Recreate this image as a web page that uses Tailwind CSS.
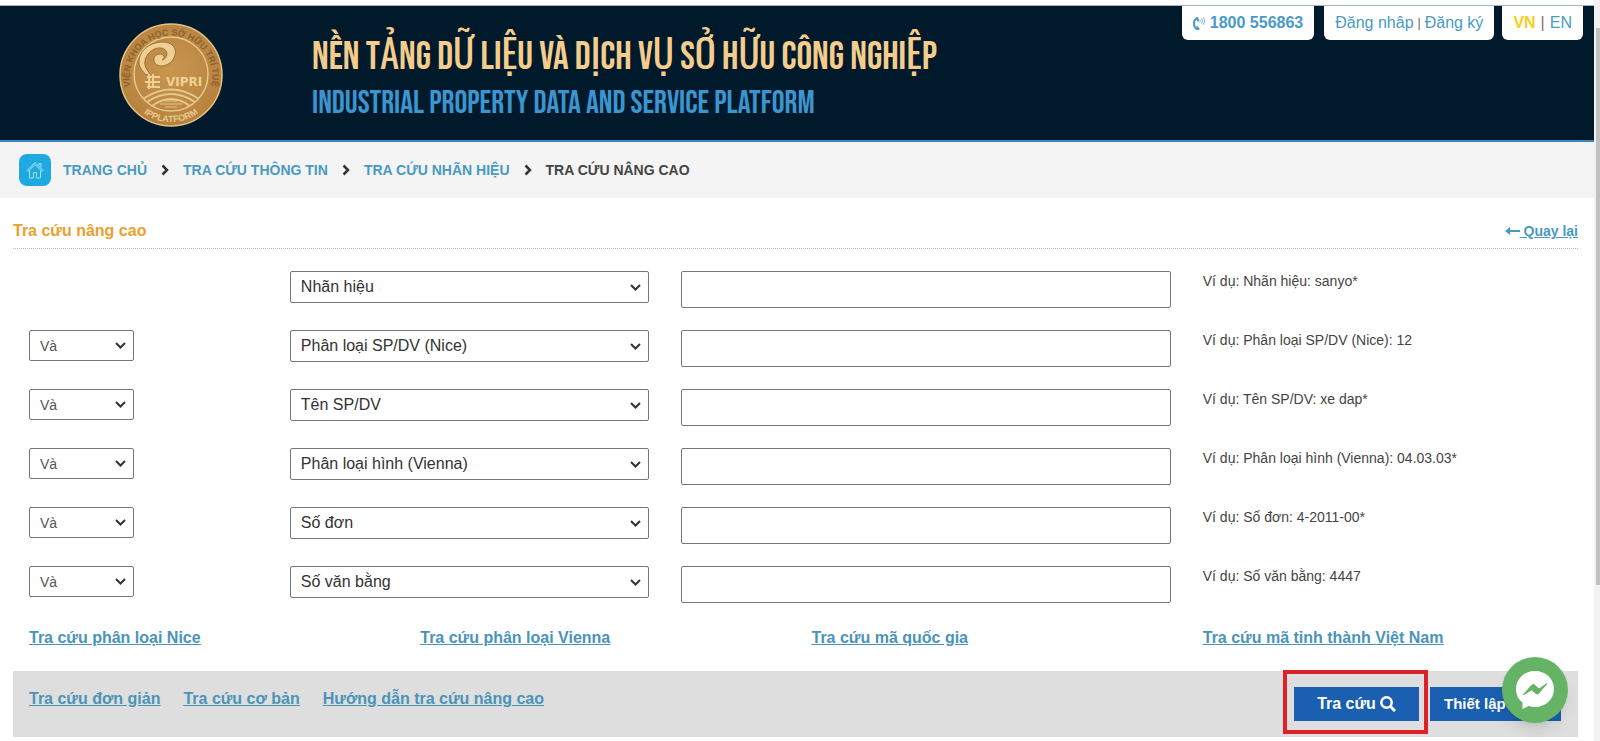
<!DOCTYPE html>
<html lang="vi">
<head>
    <meta charset="UTF-8">
    <meta name="viewport" content="width=device-width, initial-scale=1.0">
    <title>Tra cứu nâng cao</title>
    <script src="https://cdn.jsdelivr.net/npm/@tailwindcss/browser@4"></script>
</head>
<body class="flex min-h-screen bg-white pt-[5px] font-['Liberation_Sans',Arial,sans-serif] text-[#444]">

    <!-- shared icons -->
    <svg class="hidden">
        <symbol id="chevron-right" viewBox="0 0 8 12"><path d="M1.500 1.500L6 6L1.500 10.500" fill="none" stroke="#333" stroke-width="2.500"></path></symbol>
        <symbol id="chevron-down" viewBox="0 0 11 7"><path d="M1 1L5.500 5.500L10 1" fill="none" stroke="#333" stroke-width="2"></path></symbol>
    </svg>

    <div class="min-w-0 flex-1">
        <header class="relative flex items-center border-t border-b-2 border-t-[#9fb9c4] border-b-[#3d86bd] bg-[#001a2c] pt-4 pb-3">
            <svg class="ml-[118px] size-[106px] shrink-0" viewBox="0 0 106 106" aria-label="VIPRI">
                <defs>
                    <radialGradient id="gold" cx="50%" cy="45%" r="60%">
                        <stop offset="0" stop-color="#c99650"></stop>
                        <stop offset="1" stop-color="#b5803c"></stop>
                    </radialGradient>
                    <path id="arc-top" d="M13 66A41.500 41.500 0 1 1 93 66"></path>
                    <path id="arc-bottom" d="M17 83A46.500 46.500 0 0 0 89 83"></path>
                    <clipPath id="inner"><circle cx="53" cy="52" r="37"></circle></clipPath>
                </defs>
                <circle cx="53" cy="53" r="51" fill="url(#gold)" stroke="#e3c288" stroke-width="1.500"></circle>
                <circle cx="53" cy="52" r="37" fill="none" stroke="#e6c78c" stroke-width="1.500"></circle>
                <g fill="#8d6230" font-family="Liberation Sans" font-weight="bold" font-size="9">
                    <text><textPath href="#arc-top" startOffset="50%" text-anchor="middle">VIỆN KHOA HỌC SỞ HỮU TRÍ TUỆ</textPath></text>
                    <text fill="#e6c78c"><textPath href="#arc-bottom" startOffset="50%" text-anchor="middle">IPPLATFORM</textPath></text>
                </g>
                <path d="M28 53C25 49 21 46 21 40C21 27 34 20 45 20C54 20 59 26 57 33C55 42 45 46 39 43C34 40 35 32 42 32C46 32 48 36 44 38C49 37 51 30 46 27C38 23 28 31 27 39C26 44 29 48 32 52Z" fill="#efcf92" stroke="#8d6230" stroke-width="0.800"></path>
                <path d="M29 55H42M27 60H42M29 65H42M31 52V67M35 52V66" fill="none" stroke="#efcf92" stroke-width="2"></path>
                <text x="48" y="64" fill="#efd097" font-family="DejaVu Sans" font-weight="bold" font-size="12">VIPRI</text>
                <g clip-path="url(#inner)" fill="none" stroke="#e6c78c" stroke-width="2">
                    <path d="M25 77Q53 58 81 77"></path>
                    <path d="M29 80Q53 64 77 80"></path>
                    <path d="M34 84Q53 70 72 84"></path>
                    <path d="M42 82H64M47 79H59M47 85H59" stroke-width="1"></path>
                </g>
            </svg>
            <div class="ml-[88px] pt-1.5 font-['Bebas_Neue','Oswald','Roboto_Condensed','Liberation_Sans_Narrow','Liberation_Sans',sans-serif]">
                <h1 class="text-[39px] leading-[52px] text-[#f4cd8c]">NỀN TẢNG DỮ LIỆU VÀ DỊCH VỤ SỞ HỮU CÔNG NGHIỆP</h1>
                <p class="text-[32px] leading-10 text-[#3b95cf]">INDUSTRIAL PROPERTY DATA AND SERVICE PLATFORM</p>
            </div>
            <div class="absolute top-0 right-[11px] flex text-base text-[#4a9ac4]">
                <a href="tel:1800556863" class="mr-2.5 flex items-center gap-1 rounded-b-md bg-white px-[11px] py-[5px] font-bold">
                    <svg class="size-[13px]" viewBox="0 0 13 13" fill="none" stroke="currentColor" stroke-linecap="round">
                        <path d="M4.500 1C-0.500 3 0 11 5 12.500" stroke-width="2"></path>
                        <path d="M4 1.200L5 3.500M4.200 10L5.600 11.800" stroke-width="2"></path>
                        <path d="M7 3Q8 4 7 5M8.800 1.800Q10.500 4 8.800 6.200M10.600 0.600Q13 4 10.600 7.400" stroke-width="0.700"></path>
                    </svg>
                    1800 556863
                </a>
                <div class="mr-2 flex items-center gap-1 rounded-b-md bg-white px-[11px] py-[5px]">
                    <a href="#">Đăng nhâp</a><span class="text-xs text-[#555]">|</span><a href="#">Đăng ký</a>
                </div>
                <div class="flex items-center gap-[5px] rounded-b-md bg-white px-[11px] py-[5px]">
                    <a href="#" class="font-bold text-[#f5cf1c]">VN</a><span class="text-[#8a6a72]">|</span><a href="#">EN</a>
                </div>
            </div>
        </header>

        <nav class="flex items-center gap-[14px] bg-[#f4f4f4] px-[19px] py-3 text-sm font-bold text-[#4a99c1]">
            <a href="#" aria-label="Trang chủ" class="-mr-0.5 flex size-8 items-center justify-center rounded-lg bg-[#1ea9e1]">
                <svg class="size-[18px]" viewBox="0 0 18 18" fill="none" stroke="#a5e4fb" stroke-linejoin="round">
                    <path d="M1 9.500L9 1.500L17 9.500L16 10.500L9 3.500L2 10.500Z"></path>
                    <path d="M3.500 9.500V17H7.500V11.500H10.500V17H14.500V9.500M13 4.500V2.500H15V6.500"></path>
                </svg>
            </a>
            <a href="#">TRANG CHỦ</a>
            <svg class="h-3 w-2"><use href="#chevron-right"></use></svg>
            <a href="#">TRA CỨU THÔNG TIN</a>
            <svg class="h-3 w-2"><use href="#chevron-right"></use></svg>
            <a href="#">TRA CỨU NHÃN HIỆU</a>
            <svg class="h-3 w-2"><use href="#chevron-right"></use></svg>
            <span class="text-[#444]">TRA CỨU NÂNG CAO</span>
        </nav>

        <main class="pr-4 pl-[13px]">
            <div class="flex items-center justify-between border-b border-dotted border-[#bbb] pt-[21px] pb-[5px]">
                <h2 class="text-base font-bold text-[#eb9f2d]">Tra cứu nâng cao</h2>
                <a href="#" class="flex items-center text-sm font-bold text-[#4a99c1]">
                    <svg class="h-2 w-[15px]" viewBox="0 0 15 8" fill="currentColor"><path d="M0 4L5 0V3H15V5H5V8Z"></path></svg>
                    <span class="whitespace-pre underline"> Quay lại</span>
                </a>
            </div>

            <form>
                <div class="space-y-[22px] pt-[22px] text-sm">
                    <div class="grid grid-cols-12 items-start">
                        <div class="col-span-2"></div>
                        <div class="relative col-span-3 px-4">
                            <select aria-label="Trường 1" class="block h-8 w-full appearance-none rounded-xs border border-[#767676] bg-white px-2.5 text-base text-[#333]"><option>Nhãn hiệu</option></select>
                            <svg class="pointer-events-none absolute top-[13px] right-6 h-[7px] w-[11px]"><use href="#chevron-down"></use></svg>
                        </div>
                        <div class="col-span-4 px-4"><input id="q1" type="text" class="block h-[37px] w-full rounded-xs border border-[#767676] px-2"></div>
                        <label for="q1" class="col-span-3 px-4">Ví dụ: Nhãn hiệu: sanyo*</label>
                    </div>
                    <div class="grid grid-cols-12 items-start">
                        <div class="col-span-2 px-4">
                            <div class="relative w-[105px]">
                                <select aria-label="Toán tử 2" class="block h-[31px] w-full appearance-none rounded-xs border border-[#767676] bg-white px-2.5 text-sm text-[#555]"><option>Và</option><option>Hoặc</option></select>
                                <svg class="pointer-events-none absolute top-3 right-2 h-[7px] w-[11px]"><use href="#chevron-down"></use></svg>
                            </div>
                        </div>
                        <div class="relative col-span-3 px-4">
                            <select aria-label="Trường 2" class="block h-8 w-full appearance-none rounded-xs border border-[#767676] bg-white px-2.5 text-base text-[#333]"><option>Phân loại SP/DV (Nice)</option></select>
                            <svg class="pointer-events-none absolute top-[13px] right-6 h-[7px] w-[11px]"><use href="#chevron-down"></use></svg>
                        </div>
                        <div class="col-span-4 px-4"><input id="q2" type="text" class="block h-[37px] w-full rounded-xs border border-[#767676] px-2"></div>
                        <label for="q2" class="col-span-3 px-4">Ví dụ: Phân loại SP/DV (Nice): 12</label>
                    </div>
                    <div class="grid grid-cols-12 items-start">
                        <div class="col-span-2 px-4">
                            <div class="relative w-[105px]">
                                <select aria-label="Toán tử 3" class="block h-[31px] w-full appearance-none rounded-xs border border-[#767676] bg-white px-2.5 text-sm text-[#555]"><option>Và</option><option>Hoặc</option></select>
                                <svg class="pointer-events-none absolute top-3 right-2 h-[7px] w-[11px]"><use href="#chevron-down"></use></svg>
                            </div>
                        </div>
                        <div class="relative col-span-3 px-4">
                            <select aria-label="Trường 3" class="block h-8 w-full appearance-none rounded-xs border border-[#767676] bg-white px-2.5 text-base text-[#333]"><option>Tên SP/DV</option></select>
                            <svg class="pointer-events-none absolute top-[13px] right-6 h-[7px] w-[11px]"><use href="#chevron-down"></use></svg>
                        </div>
                        <div class="col-span-4 px-4"><input id="q3" type="text" class="block h-[37px] w-full rounded-xs border border-[#767676] px-2"></div>
                        <label for="q3" class="col-span-3 px-4">Ví dụ: Tên SP/DV: xe dap*</label>
                    </div>
                    <div class="grid grid-cols-12 items-start">
                        <div class="col-span-2 px-4">
                            <div class="relative w-[105px]">
                                <select aria-label="Toán tử 4" class="block h-[31px] w-full appearance-none rounded-xs border border-[#767676] bg-white px-2.5 text-sm text-[#555]"><option>Và</option><option>Hoặc</option></select>
                                <svg class="pointer-events-none absolute top-3 right-2 h-[7px] w-[11px]"><use href="#chevron-down"></use></svg>
                            </div>
                        </div>
                        <div class="relative col-span-3 px-4">
                            <select aria-label="Trường 4" class="block h-8 w-full appearance-none rounded-xs border border-[#767676] bg-white px-2.5 text-base text-[#333]"><option>Phân loại hình (Vienna)</option></select>
                            <svg class="pointer-events-none absolute top-[13px] right-6 h-[7px] w-[11px]"><use href="#chevron-down"></use></svg>
                        </div>
                        <div class="col-span-4 px-4"><input id="q4" type="text" class="block h-[37px] w-full rounded-xs border border-[#767676] px-2"></div>
                        <label for="q4" class="col-span-3 px-4">Ví dụ: Phân loại hình (Vienna): 04.03.03*</label>
                    </div>
                    <div class="grid grid-cols-12 items-start">
                        <div class="col-span-2 px-4">
                            <div class="relative w-[105px]">
                                <select aria-label="Toán tử 5" class="block h-[31px] w-full appearance-none rounded-xs border border-[#767676] bg-white px-2.5 text-sm text-[#555]"><option>Và</option><option>Hoặc</option></select>
                                <svg class="pointer-events-none absolute top-3 right-2 h-[7px] w-[11px]"><use href="#chevron-down"></use></svg>
                            </div>
                        </div>
                        <div class="relative col-span-3 px-4">
                            <select aria-label="Trường 5" class="block h-8 w-full appearance-none rounded-xs border border-[#767676] bg-white px-2.5 text-base text-[#333]"><option>Số đơn</option></select>
                            <svg class="pointer-events-none absolute top-[13px] right-6 h-[7px] w-[11px]"><use href="#chevron-down"></use></svg>
                        </div>
                        <div class="col-span-4 px-4"><input id="q5" type="text" class="block h-[37px] w-full rounded-xs border border-[#767676] px-2"></div>
                        <label for="q5" class="col-span-3 px-4">Ví dụ: Số đơn: 4-2011-00*</label>
                    </div>
                    <div class="grid grid-cols-12 items-start">
                        <div class="col-span-2 px-4">
                            <div class="relative w-[105px]">
                                <select aria-label="Toán tử 6" class="block h-[31px] w-full appearance-none rounded-xs border border-[#767676] bg-white px-2.5 text-sm text-[#555]"><option>Và</option><option>Hoặc</option></select>
                                <svg class="pointer-events-none absolute top-3 right-2 h-[7px] w-[11px]"><use href="#chevron-down"></use></svg>
                            </div>
                        </div>
                        <div class="relative col-span-3 px-4">
                            <select aria-label="Trường 6" class="block h-8 w-full appearance-none rounded-xs border border-[#767676] bg-white px-2.5 text-base text-[#333]"><option>Số văn bằng</option></select>
                            <svg class="pointer-events-none absolute top-[13px] right-6 h-[7px] w-[11px]"><use href="#chevron-down"></use></svg>
                        </div>
                        <div class="col-span-4 px-4"><input id="q6" type="text" class="block h-[37px] w-full rounded-xs border border-[#767676] px-2"></div>
                        <label for="q6" class="col-span-3 px-4">Ví dụ: Số văn bằng: 4447</label>
                    </div>
                </div>

                <div class="grid grid-cols-4 pt-[23px] pb-[21px] font-bold text-[#4a94b8] underline">
                    <a href="#" class="px-4">Tra cứu phân loại Nice</a>
                    <a href="#" class="px-4">Tra cứu phân loại Vienna</a>
                    <a href="#" class="px-4">Tra cứu mã quốc gia</a>
                    <a href="#" class="px-4">Tra cứu mã tỉnh thành Việt Nam</a>
                </div>

                <div class="flex items-start justify-between bg-[#dedede] py-4 pr-[17px] pl-4 font-bold">
                    <div class="flex gap-[23px] text-[#4a94b8] underline">
                        <a href="#">Tra cứu đơn giản</a>
                        <a href="#">Tra cứu cơ bản</a>
                        <a href="#">Hướng dẫn tra cứu nâng cao</a>
                    </div>
                    <div class="flex gap-[11px] text-white">
                        <div class="relative">
                            <button type="submit" class="flex h-[34px] w-[125px] items-center justify-center gap-1 bg-[#1a5fb0]">
                                Tra cứu
                                <svg class="size-4" viewBox="0 0 16 16" fill="none" stroke="currentColor" stroke-width="2.500"><circle cx="6.500" cy="6.500" r="5.200"></circle><path d="M10.300 10.300L15 15" stroke-width="3"></path></svg>
                            </button>
                            <span class="pointer-events-none absolute -top-[17px] -right-[9px] -bottom-[13px] -left-[11px] border-4 border-[#dc2228]"></span>
                        </div>
                        <button type="reset" class="flex h-[34px] w-[131px] items-center gap-1 bg-[#1a5fb0] px-3.5 text-[15px]">Thiết lập lại</button>
                    </div>
                </div>
            </form>
        </main>
    </div>

    <!-- scrollbar -->
    <div class="-mt-[5px] w-[6px] bg-[#f1f1f1] pt-7 pl-0.5">
        <div class="h-[557px] bg-[#c1c1c1]"></div>
    </div>

    <!-- Messenger chat -->
    <button type="button" aria-label="Messenger" class="fixed right-8 bottom-[18px] flex size-[66px] items-center justify-center rounded-full bg-[#65b466] shadow-lg">
        <svg class="size-[38px]" viewBox="0 0 38 38">
            <path d="M19 0C8 0 0 8 0 18C0 24 2.500 28.500 6.500 31.500V38L12.500 35C14.500 35.700 16.700 36 19 36C30 36 38 28 38 18C38 8 30 0 19 0Z" fill="#fff"></path>
            <path d="M7 24L16 14Q17 13 18.500 14L23 18L31 12.500L22.500 22.500Q21.500 23.500 20 22.500L15.500 19Z" fill="#65b466" stroke="#65b466" stroke-linejoin="round"></path>
        </svg>
    </button>

</body>
</html>
